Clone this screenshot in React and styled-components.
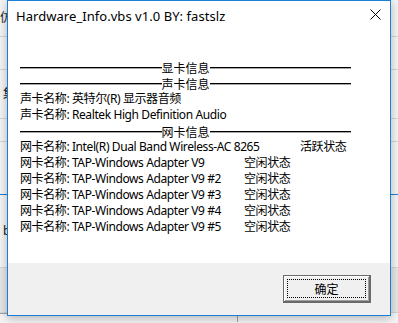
import React from 'react';
import styled, { createGlobalStyle } from 'styled-components';

const GlobalStyle = createGlobalStyle`
  html, body {
    margin: 0;
    padding: 0;
    background: #f3f3f3;
  }
  body {
    font-family: "Noto Sans", "Noto Sans CJK SC", sans-serif;
  }
`;

const Desktop = styled.div`
  position: relative;
  width: 398px;
  height: 323px;
  overflow: hidden;
  background: #f4f4f4;
`;

const BackApp = styled.div`
  display: flex;
  flex-direction: column;
  width: 398px;
  font-size: 12px;
  color: #222;
`;

const BackRow = styled.div`
  height: ${(p) => p.h}px;
  border-bottom: 1px solid ${(p) => p.line || '#d4d4d4'};
  background: ${(p) => p.bg || 'transparent'};
  line-height: ${(p) => p.h}px;
  white-space: nowrap;
  overflow: hidden;
`;

const BackTail = styled.div`
  width: 237px;
  height: 8px;
  border-top: 1px solid #a0a0a0;
  border-right: 1px solid #a0a0a0;
`;

const Window = styled.div`
  position: absolute;
  left: 7px;
  top: 0;
  width: 382px;
  height: 314px;
  border: 1px solid #1c7fd6;
  background: #ffffff;
  display: flex;
  flex-direction: column;
  box-shadow: 0 2px 9px rgba(0, 0, 0, 0.28);
  font-family: "Noto Sans", "Noto Sans CJK SC", sans-serif;
  font-size: 12px;
  color: #000;
`;

const TitleBar = styled.div`
  height: 30px;
  display: flex;
  align-items: center;
  padding-left: 8px;
`;

const Title = styled.div`
  flex: 1;
  font-size: 13px;
  letter-spacing: 0.05px;
`;

const Close = styled.div`
  width: 30px;
  height: 30px;
  display: flex;
  align-items: center;
  justify-content: center;
  margin-top: -3px;
`;

const Body = styled.div`
  height: 232px;
  padding: 28px 0 0 12px;
  box-sizing: border-box;
  letter-spacing: -0.4px;
`;

const Row = styled.div`
  height: 16px;
  line-height: 16px;
  white-space: pre;
  tab-size: 56px;
  font-size: 12px;
`;

const SepRow = styled.div`
  width: 331px;
  height: 16px;
  display: flex;
  align-items: center;
  font-size: 12px;
  line-height: 16px;
`;

const SepLabel = styled.span`
  line-height: 13px;
  padding-top: 3px;
  letter-spacing: 0;
`;

const Rule = styled.span`
  flex: 1;
  height: 1px;
  background: #000;
  box-shadow: 0 1px 0 rgba(0, 0, 0, 0.35);
`;

const Footer = styled.div`
  flex: 1;
  background: #f0f0f0;
  display: flex;
  justify-content: flex-end;
  align-items: flex-start;
  padding: 12px 19px 0 0;
`;

const Button = styled.button`
  width: 88px;
  height: 28px;
  padding: 0;
  border: 1px solid #6a6a6a;
  border-right-width: 2px;
  border-bottom-width: 2px;
  background: #f0f0f0;
  box-shadow: inset 1px 1px 0 #ffffff, inset -1px -1px 0 #a0a0a0;
  display: flex;
  align-items: stretch;
  justify-content: stretch;
  font-family: "Noto Sans CJK SC", sans-serif;
  font-size: 12px;
  color: #000;
`;

const Focus = styled.span`
  flex: 1;
  margin: 3px;
  border: 1px dotted #000;
  display: flex;
  align-items: center;
  justify-content: center;
`;

const Separator = ({ label }) => (
  <SepRow>
    <Rule />
    <SepLabel>{label}</SepLabel>
    <Rule />
  </SepRow>
);

const nics = [
  ['Intel(R) Dual Band Wireless-AC 8265', '活跃状态'],
  ['TAP-Windows Adapter V9', '空闲状态'],
  ['TAP-Windows Adapter V9 #2', '空闲状态'],
  ['TAP-Windows Adapter V9 #3', '空闲状态'],
  ['TAP-Windows Adapter V9 #4', '空闲状态'],
  ['TAP-Windows Adapter V9 #5', '空闲状态'],
];

export default function App() {
  return (
    <Desktop>
      <GlobalStyle />
      <BackApp>
        <BackRow h={36}>仿</BackRow>
        <BackRow h={32} />
        <BackRow h={48}>&nbsp;集</BackRow>
        <BackRow h={22} />
        <BackRow h={52} line="#1c7fd6" />
        <BackRow h={72}>&nbsp;b</BackRow>
        <BackRow h={44} bg="#e6e6e6" />
        <BackTail />
      </BackApp>
      <Window>
        <TitleBar>
          <Title>Hardware_Info.vbs v1.0 BY: fastslz</Title>
          <Close>
            <svg width="11" height="11" viewBox="0 0 11 11">
              <path d="M0.5 0.5 L10.5 10.5 M10.5 0.5 L0.5 10.5" stroke="#000" strokeWidth="1" />
            </svg>
          </Close>
        </TitleBar>
        <Body>
          <Separator label="显卡信息" />
          <Separator label="声卡信息" />
          <Row>声卡名称: 英特尔(R) 显示器音频</Row>
          <Row>声卡名称: Realtek High Definition Audio</Row>
          <Separator label="网卡信息" />
          {nics.map(([name, state]) => (
            <Row key={name}>{`网卡名称: ${name}\t${state}`}</Row>
          ))}
        </Body>
        <Footer>
          <Button>
            <Focus>确定</Focus>
          </Button>
        </Footer>
      </Window>
    </Desktop>
  );
}
